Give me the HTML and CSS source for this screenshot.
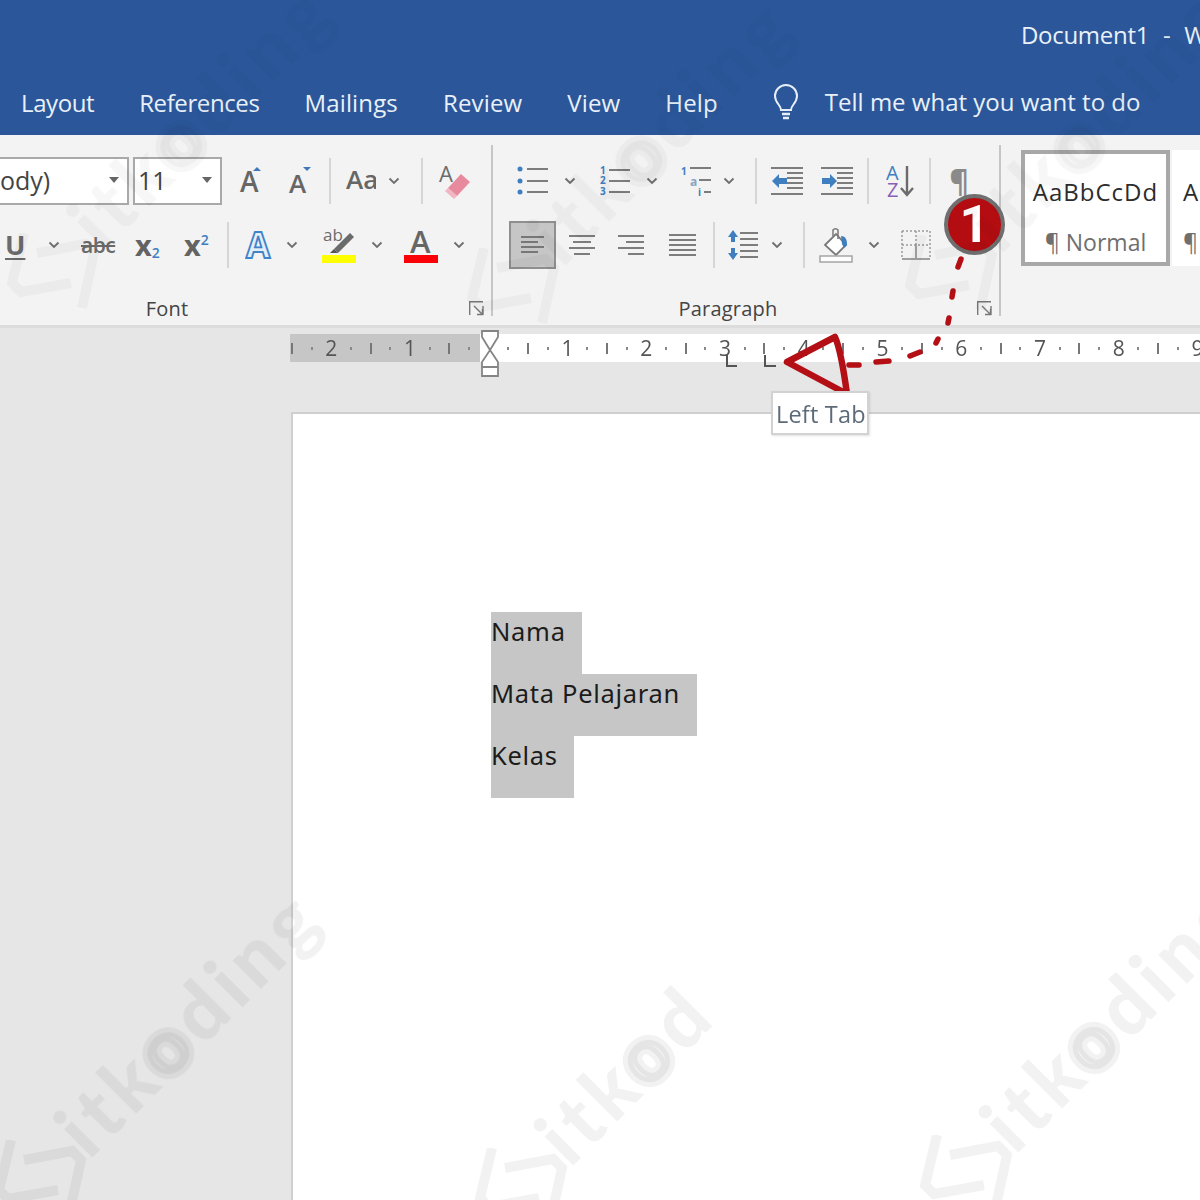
FILE: index.html
```html
<!DOCTYPE html>
<html lang="id">
<head>
<meta charset="utf-8">
<title>Document1 - Word</title>
<link rel="stylesheet" href="styles.css">
</head>
<body>
<div class="app">
  <header class="title-area">
    <div class="titlebar">Document1&nbsp; - &nbsp;Word</div>
    <nav class="tabs">
      <span class="tight">Layout</span><span class="tight">References</span><span>Mailings</span><span>Review</span><span>View</span><span>Help</span>
      <svg class="bulb" width="26" height="38" viewBox="0 0 26 38"><path d="M8 26c0-5-6-7-6-14a11 11 0 0 1 22 0c0 7-6 9-6 14z" fill="none" stroke="#e8eef7" stroke-width="2"/><path d="M9 30h8M10 34h6" stroke="#e8eef7" stroke-width="2.4"/></svg>
      <span class="tell">Tell me what you want to do</span>
    </nav>
  </header>

  <section class="ribbon">
    <div class="group font-group">
      <div class="row">
        <div class="combo font-combo"><span class="combo-text">ody)</span><i class="caret"></i></div>
        <div class="combo size-combo"><span class="combo-text">11</span><i class="caret"></i></div>
        <svg class="ml13" width="30" height="36" viewBox="0 0 30 36"><text x="5" y="29" class="glyph mid" font-size="28">A</text><path d="M18 8l4-4 4 4z" fill="#3f78b5"/></svg>
        <svg class="ml18" width="30" height="36" viewBox="0 0 30 36"><text x="6" y="30" class="glyph mid" font-size="26">A</text><path d="M20 4l4 4 4-4z" fill="#3f78b5"/></svg>
        <i class="sep ml16"></i>
        <svg class="ml15" width="30" height="30" viewBox="0 0 30 30"><text x="0" y="23" class="glyph mid" font-size="26">Aa</text></svg>
        <svg class="chev ml12" viewBox="0 0 12 8"><path d="M1.5 1.5L6 6l4.500-4.500"/></svg>
        <i class="sep ml21"></i>
        <svg class="ml15" width="34" height="38" viewBox="0 0 34 38"><text x="1" y="20" class="glyph" font-size="22">A</text><path d="M10 26L23 12l9 8-13 14z" fill="#e88a9e"/><path d="M10 26l9 8-3 3-9-8z" fill="#f2b6c2"/></svg>
      </div>
      <div class="row row2">
        <span class="u ml5">U</span>
        <svg class="chev ml23" viewBox="0 0 12 8"><path d="M1.500 1.500L6 6l4.500-4.500"/></svg>
        <span class="strike ml21">abc</span>
        <span class="script ml21">x<sub>2</sub></span>
        <span class="script sup-wrap ml24">x<sup>2</sup></span>
        <i class="sep ml16"></i>
        <svg class="ml16" width="28" height="32" viewBox="0 0 28 32"><text x="1" y="29" class="outlined" font-size="35">A</text></svg>
        <svg class="chev ml13" viewBox="0 0 12 8"><path d="M1.500 1.500L6 6l4.500-4.500"/></svg>
        <svg class="ml24" width="34" height="36" viewBox="0 0 34 36"><text x="1" y="14" class="glyph" font-size="17">ab</text><path d="M12 22L28 6l4 4-16 16z" fill="#6b6b6b"/><path d="M8 26l4-4 4 4z" fill="#555"/><rect y="28" width="34" height="8" fill="#ffff00"/></svg>
        <svg class="chev ml15" viewBox="0 0 12 8"><path d="M1.500 1.500L6 6l4.500-4.500"/></svg>
        <svg class="ml21" width="34" height="36" viewBox="0 0 34 36"><text x="6" y="26" class="glyph mid" font-size="31">A</text><rect y="28" width="34" height="8" fill="#fb0007"/></svg>
        <svg class="chev ml15" viewBox="0 0 12 8"><path d="M1.500 1.500L6 6l4.500-4.500"/></svg>
      </div>
      <div class="label-row">
        <span class="label label-font">Font</span>
        <svg class="launcher launcher-font" viewBox="0 0 15 15"><path d="M.7 14V.7H14M14 5v9M5 5l8 8M8 13.500h5.500V8"/></svg>
      </div>
    </div>
    <i class="group-sep"></i>

    <div class="group para-group">
      <div class="row">
        <svg class="ml24" width="31" height="30" viewBox="0 0 31 30"><g fill="#3f7fc0"><circle cx="3" cy="3" r="2.500"/><circle cx="3" cy="15" r="2.500"/><circle cx="3" cy="26" r="2.500"/></g><path d="M10 3h21M10 15h21M10 26h21" class="ln"/></svg>
        <svg class="chev ml16" viewBox="0 0 12 8"><path d="M1.500 1.500L6 6l4.500-4.500"/></svg>
        <svg class="ml22" width="32" height="30" viewBox="0 0 32 30"><g class="tiny"><text x="2" y="8">1</text><text x="2" y="18">2</text><text x="2" y="29">3</text></g><path d="M11 4h21M11 15h21M11 26h21" class="ln"/></svg>
        <svg class="chev ml16" viewBox="0 0 12 8"><path d="M1.500 1.500L6 6l4.500-4.500"/></svg>
        <svg class="ml22" width="32" height="30" viewBox="0 0 32 30"><g class="tiny"><text x="1" y="9">1</text><text x="10" y="20" class="tiny-a">a</text><text x="18" y="30">i</text></g><path d="M10 2h21M19 14h12M24 26h7" class="ln"/></svg>
        <svg class="chev ml11" viewBox="0 0 12 8"><path d="M1.500 1.500L6 6l4.500-4.500"/></svg>
        <i class="sep ml20"></i>
        <svg class="ml14" width="32" height="30" viewBox="0 0 32 30"><path d="M0 2h32M16 7h16M16 12h16M16 17h16M16 22h16M0 28h32" class="ln"/><path d="M1 15l7-7v4h8v6H8v4z" fill="#3f7fc0"/></svg>
        <svg class="ml18" width="32" height="30" viewBox="0 0 32 30"><path d="M0 2h32M16 7h16M16 12h16M16 17h16M16 22h16M0 28h32" class="ln"/><path d="M16 15l-7-7v4H1v6h8v4z" fill="#3f7fc0"/></svg>
        <i class="sep ml14"></i>
        <svg class="ml17" width="30" height="34" viewBox="0 0 30 34"><text x="0" y="16" class="az-a">A</text><text x="1" y="33" class="az-z">Z</text><path d="M21 2v28M15 24l6 7 6-7" fill="none" stroke="#6b6b6b" stroke-width="2.400"/></svg>
        <i class="sep ml13"></i>
        <span class="pilcrow ml17">¶</span>
      </div>
      <div class="row row2">
        <div class="active-btn ml16"><svg width="23" height="18" viewBox="0 0 23 18"><path d="M0 1h23M0 6h17M0 11h23M0 16h17" stroke="#777" stroke-width="2"/></svg></div>
        <svg class="ml11" width="30" height="22" viewBox="0 0 30 22"><path d="M2 2h26M6 8h18M2 14h26M7 20h16" class="ln"/></svg>
        <svg class="ml21" width="28" height="22" viewBox="0 0 28 22"><path d="M0 2h26M8 8h18M0 14h26M10 20h16" class="ln"/></svg>
        <svg class="ml22" width="29" height="24" viewBox="0 0 29 24"><path d="M1 2h27M1 7h27M1 12h27M1 17h27M1 22h27" class="ln"/></svg>
        <i class="sep ml16"></i>
        <svg class="ml13" width="30" height="32" viewBox="0 0 30 32"><path d="M5 1l5 7H7v5H3V8H0zM5 31l5-7H7v-5H3v5H0z" fill="#3f7fc0"/><path d="M12 4h18M12 10h18M12 16h18M12 22h18M12 28h18" class="ln"/></svg>
        <svg class="chev ml13" viewBox="0 0 12 8"><path d="M1.500 1.500L6 6l4.500-4.500"/></svg>
        <i class="sep ml20"></i>
        <svg class="ml14" width="34" height="36" viewBox="0 0 34 36"><path d="M6 18L17 7l10 11-10 10z" fill="#fff" stroke="#7a7a7a" stroke-width="1.800"/><path d="M14 9V3a3 3 0 0 1 5 0v9" fill="none" stroke="#7a7a7a" stroke-width="1.500"/><path d="M22 9c5 0 6 4 6 9l-3 3-2-4z" fill="#3f7fc0"/><rect x="1" y="29" width="32" height="6" fill="#fdfdfd" stroke="#a5a5a5" stroke-width="1.500"/></svg>
        <svg class="chev ml15" viewBox="0 0 12 8"><path d="M1.500 1.500L6 6l4.500-4.500"/></svg>
        <svg class="ml21" width="30" height="30" viewBox="0 0 30 30"><path d="M1 1h28M1 15h28M1 1v28M29 1v28M15 1v14" fill="none" stroke="#9a9a9a" stroke-width="1.500" stroke-dasharray="2 2"/><path d="M1 29h28M15 15v14" stroke="#a0a0a0" stroke-width="2"/></svg>
      </div>
      <div class="label-row">
        <span class="label label-para">Paragraph</span>
        <svg class="launcher launcher-para" viewBox="0 0 15 15"><path d="M.7 14V.7H14M14 5v9M5 5l8 8M8 13.500h5.500V8"/></svg>
      </div>
    </div>
    <i class="group-sep"></i>

    <div class="styles-group">
      <div class="style-card selected"><span class="style-sample">AaBbCcDd</span><span class="style-name">¶ Normal</span></div>
      <div class="style-card"><span class="style-sample">A</span><span class="style-name">¶</span></div>
    </div>
  </section>

  <div class="ruler-row">
    <div class="ruler">
      <span class="t"></span><span class="d"></span><span>2</span><span class="d"></span><span class="t"></span><span class="d"></span><span>1</span><span class="d"></span><span class="t"></span><span class="d"></span><span></span>
      <span class="d"></span><span class="t"></span><span class="d"></span><span>1</span>
      <span class="d"></span><span class="t"></span><span class="d"></span><span>2</span>
      <span class="d"></span><span class="t"></span><span class="d"></span><span>3</span>
      <span class="d"></span><span class="t"></span><span class="d"></span><span>4</span>
      <span class="d"></span><span class="t"></span><span class="d"></span><span>5</span>
      <span class="d"></span><span class="t"></span><span class="d"></span><span>6</span>
      <span class="d"></span><span class="t"></span><span class="d"></span><span>7</span>
      <span class="d"></span><span class="t"></span><span class="d"></span><span>8</span>
      <span class="d"></span><span class="t"></span><span class="d"></span><span>9</span>
    </div>
  </div>

  <main class="workspace">
    <article class="page">
      <p class="sel sel-a">Nama</p>
      <p class="sel sel-b">Mata Pelajaran</p>
      <p class="sel sel-c">Kelas</p>
    </article>
  </main>

  <svg class="overlay" width="1200" height="1200" viewBox="0 0 1200 1200">
    <g fill="none" stroke="#858585" stroke-width="1.800">
      <path d="M482 331h16v6l-8 13-8-13zM490 350l8 12v5h-16v-5zM482 367h16v9h-16z" fill="#fff"/>
    </g>
    <path d="M727 355v11h10M765 355v11h11" fill="none" stroke="#555" stroke-width="2"/>
    <g fill="none" stroke="#b30f14" stroke-linecap="round">
      <path d="M787 362L835 337Q841 350 847 394Z" stroke-width="6.500" stroke-linejoin="round"/>
      <path d="M849 365h10M876 362l13-1M910 356l10-4M936 343l2-4M948 323l1-5M952 297l1-6M958 267l3-8" stroke-width="5.500"/>
    </g>
  </svg>
  <div class="tooltip">Left Tab</div>
  <div class="badge">1</div>

  <div class="wm wm-1"><svg class="wm-logo" width="100" height="80" viewBox="0 0 100 80"><path d="M17 0L5 50l9 9 50-9M30 20l48-9 9 9-12 55"/></svg><span class="wm-text">itk<b>o</b>ding</span></div>
  <div class="wm wm-2"><svg class="wm-logo" width="100" height="80" viewBox="0 0 100 80"><path d="M17 0L5 50l9 9 50-9M30 20l48-9 9 9-12 55"/></svg><span class="wm-text">itk<b>o</b>d</span></div>
  <div class="wm wm-3"><svg class="wm-logo" width="100" height="80" viewBox="0 0 100 80"><path d="M17 0L5 50l9 9 50-9M30 20l48-9 9 9-12 55"/></svg><span class="wm-text">itk<b>o</b>ding</span></div>
  <div class="wm wm-4 wm-faint"><svg class="wm-logo" width="100" height="80" viewBox="0 0 100 80"><path d="M17 0L5 50l9 9 50-9M30 20l48-9 9 9-12 55"/></svg><span class="wm-text">itk<b>o</b>ding</span></div>
  <div class="wm wm-5 wm-faint"><svg class="wm-logo" width="100" height="80" viewBox="0 0 100 80"><path d="M17 0L5 50l9 9 50-9M30 20l48-9 9 9-12 55"/></svg><span class="wm-text">itk<b>o</b>ding</span></div>
  <div class="wm wm-6 wm-faint"><svg class="wm-logo" width="100" height="80" viewBox="0 0 100 80"><path d="M17 0L5 50l9 9 50-9M30 20l48-9 9 9-12 55"/></svg><span class="wm-text">itk<b>o</b>ding</span></div>
</div>
</body>
</html>
```
FILE: styles.css
```css
* { box-sizing: border-box; }
html, body { margin: 0; padding: 0; }
body { width: 1200px; height: 1200px; overflow: hidden; font-family: "Open Sans", "Noto Sans", sans-serif; background: #e6e6e6; }
.app { position: relative; width: 1200px; height: 1200px; overflow: hidden; display: flex; flex-direction: column; filter: blur(.45px); }

/* title + tabs */
.title-area { height: 135px; background: #2b579a; color: #e9f0f8; flex: none; }
.titlebar { height: 70px; padding-left: 1021px; line-height: 70px; font-size: 24px; white-space: nowrap; overflow: hidden; letter-spacing: -.3px; word-spacing: 1px; }
.tabs { height: 65px; padding-left: 21px; display: flex; align-items: center; gap: 45px; font-size: 24px; letter-spacing: .15px; white-space: nowrap; }
.tight { letter-spacing: -.4px; }
.bulb { margin-left: 10px; margin-right: -19px; flex: none; }
.tell { letter-spacing: 0; margin-top: -2px; }

/* ribbon */
.ribbon { height: 193px; flex: none; display: flex; background: #f3f3f3; border-bottom: 3px solid #dcdcdc; overflow: hidden; }
.group { padding-top: 22px; flex: none; }
.font-group { width: 491px; }
.para-group { width: 506px; }
.group-sep { flex: none; width: 2px; height: 171px; margin-top: 10px; background: #c6c6c6; }
.row { height: 48px; display: flex; align-items: center; }
.row2 { margin-top: 16px; }
.row svg, .row span, .row i, .row div { flex: none; }
.label-row { display: flex; align-items: center; height: 24px; margin-top: 27px; }
.label { font-size: 20px; color: #444; text-align: center; letter-spacing: .2px; }
.label-font { width: 334px; }
.label-para { width: 470px; }
.launcher { width: 15px; height: 15px; fill: none; stroke: #777; stroke-width: 1.400; flex: none; }
.launcher-font { margin-left: 135px; }
.launcher-para { margin-left: 14px; }

.ml5 { margin-left: 5px; } .ml11 { margin-left: 11px; } .ml12 { margin-left: 12px; }
.ml13 { margin-left: 13px; } .ml14 { margin-left: 14px; } .ml15 { margin-left: 15px; }
.ml16 { margin-left: 16px; } .ml17 { margin-left: 17px; } .ml18 { margin-left: 18px; }
.ml20 { margin-left: 20px; } .ml21 { margin-left: 21px; } .ml22 { margin-left: 22px; }
.ml23 { margin-left: 23px; } .ml24 { margin-left: 24px; }

.combo { height: 48px; background: #fff; border: 2px solid #a9a9a9; display: flex; align-items: center; justify-content: space-between; font-size: 25px; color: #444; padding-bottom: 2px; }
.font-combo { width: 129px; border-left: 0; }
.size-combo { width: 89px; margin-left: 4px; padding-left: 3px; }
.combo-text { line-height: 1; }
.caret { width: 0; height: 0; border: 5px solid transparent; border-top: 6px solid #666; border-bottom: 0; margin-right: 8px; }
.sep { width: 2px; height: 46px; background: #d6d6d6; }
.chev { width: 12px; height: 8px; fill: none; stroke: #6e6e6e; stroke-width: 1.800; }

.glyph { font-family: "Open Sans", sans-serif; fill: #6b6b6b; }
.mid { font-weight: 600; fill: #666; }
.outlined { font-family: "Open Sans", sans-serif; font-weight: 700; fill: #e4eef8; stroke: #3f83c9; stroke-width: 1.800; }
.u { width: 20px; text-align: center; font-size: 27px; line-height: 30px; font-weight: 700; color: #6b6b6b; text-decoration: underline; text-decoration-thickness: 2px; text-underline-offset: 3px; }
.strike { width: 33px; text-align: center; font-size: 21px; font-weight: 600; color: #6b6b6b; text-decoration: line-through; letter-spacing: -.5px; }
.script { width: 25px; font-size: 29px; line-height: 30px; font-weight: 700; color: #636363; white-space: nowrap; }
.script sub, .script sup { font-size: 14px; font-weight: 600; color: #3f7fc0; line-height: 0; }
.script sub { vertical-align: -2px; }
.sup-wrap { width: 27px; }
.ln { stroke: #7d7d7d; stroke-width: 2; fill: none; }
.tiny text { font-size: 10px; font-weight: 700; fill: #3f7fc0; font-family: "Open Sans", sans-serif; }
.tiny .tiny-a { fill: #8aa4c4; font-size: 12px; }
.az-a { font: 500 20px "Open Sans", sans-serif; fill: #3f7fc0; }
.az-z { font: 500 20px "Open Sans", sans-serif; fill: #8a5fb8; }
.pilcrow { width: 22px; font-size: 30px; line-height: 32px; color: #8a8a8a; text-align: center; font-weight: 700; }
.active-btn { width: 47px; height: 48px; background: #c6c6c6; border: 2px solid #8f8f8f; display: flex; align-items: center; justify-content: center; }

/* styles gallery */
.styles-group { flex: none; display: flex; padding: 15px 0 0 20px; gap: 2px; }
.style-card { width: 149px; height: 116px; background: #fff; display: flex; flex-direction: column; align-items: center; padding-top: 24px; color: #333; flex: none; }
.style-card.selected { border: 4px solid #a8a8a8; padding-top: 21px; }
.style-card:not(.selected) { align-items: flex-start; padding-left: 11px; padding-top: 25px; }
.style-sample { font-size: 24px; line-height: 34px; letter-spacing: 1px; color: #2c2c2c; }
.style-name { margin-top: 16px; font-size: 23px; line-height: 34px; color: #6f6f6f; }

/* ruler */
.ruler-row { flex: none; height: 34px; padding: 6px 0 0 282px; overflow: hidden; }
.ruler { height: 28px; background: linear-gradient(90deg, transparent 8px, #c6c6c6 8px, #c6c6c6 198px, #fff 198px); display: grid; grid-auto-flow: column; grid-auto-columns: 19.690px; align-items: center; justify-items: center; color: #555; font-size: 21px; line-height: 28px; }
.ruler span { display: block; }
.t { width: 2px; height: 11px; background: #777; }
.d { width: 2px; height: 3px; background: #888; }

/* page */
.workspace { flex: 1; padding: 50px 0 0 291px; overflow: hidden; }
.page { height: 900px; background: #fff; border: 2px solid #cfcfcf; border-width: 2px 0 0 2px; padding: 198px 0 0 198px; }
.sel { margin: 0; height: 62px; background: #c6c6c6; color: #1c1c1c; font-family: "Noto Sans", sans-serif; font-size: 25.500px; line-height: 38px; letter-spacing: .7px; }
.sel-a { width: 91px; }
.sel-b { width: 206px; }
.sel-c { width: 83px; }

/* overlays */
.overlay { position: absolute; left: 0; top: 0; pointer-events: none; }
.tooltip { position: absolute; left: 771px; top: 391px; width: 98px; height: 44px; background: #fff; border: 2px solid #d2d2d2; box-shadow: 1px 1px 2px rgba(0,0,0,.12); color: #5d6b78; font-size: 23.500px; line-height: 42px; padding-left: 3px; white-space: nowrap; letter-spacing: .2px; }
.badge { position: absolute; left: 944px; top: 194px; width: 61px; height: 61px; border-radius: 50%; background: #b30d12; border: 4px solid #6f6f6f; color: #fff; font: 700 52px/53px "Roboto", sans-serif; text-align: center; }

/* watermark */
.wm { position: absolute; width: 100px; height: 80px; pointer-events: none; color: rgba(0,0,0,.05); }
.wm-faint { opacity: .65; }
.wm-logo { position: absolute; left: 0; top: 0; fill: none; stroke: rgba(0,0,0,.05); stroke-width: 10; }
.wm-text { position: absolute; left: 102px; top: -52px; height: 80px; line-height: 80px; font-family: "Lato", sans-serif; font-weight: 900; font-size: 79px; letter-spacing: 6px; white-space: nowrap; transform: rotate(-45deg); transform-origin: 0 100%; }
.wm-text b { font-weight: 900; -webkit-text-stroke: 10px rgba(0,0,0,.05); }
.wm-1 { left: -6px; top: 1140px; }
.wm-2 { left: 475px; top: 1148px; }
.wm-3 { left: 920px; top: 1135px; }
.wm-4 { left: 7px; top: 233px; }
.wm-5 { left: 467px; top: 248px; }
.wm-6 { left: 905px; top: 235px; }
```
